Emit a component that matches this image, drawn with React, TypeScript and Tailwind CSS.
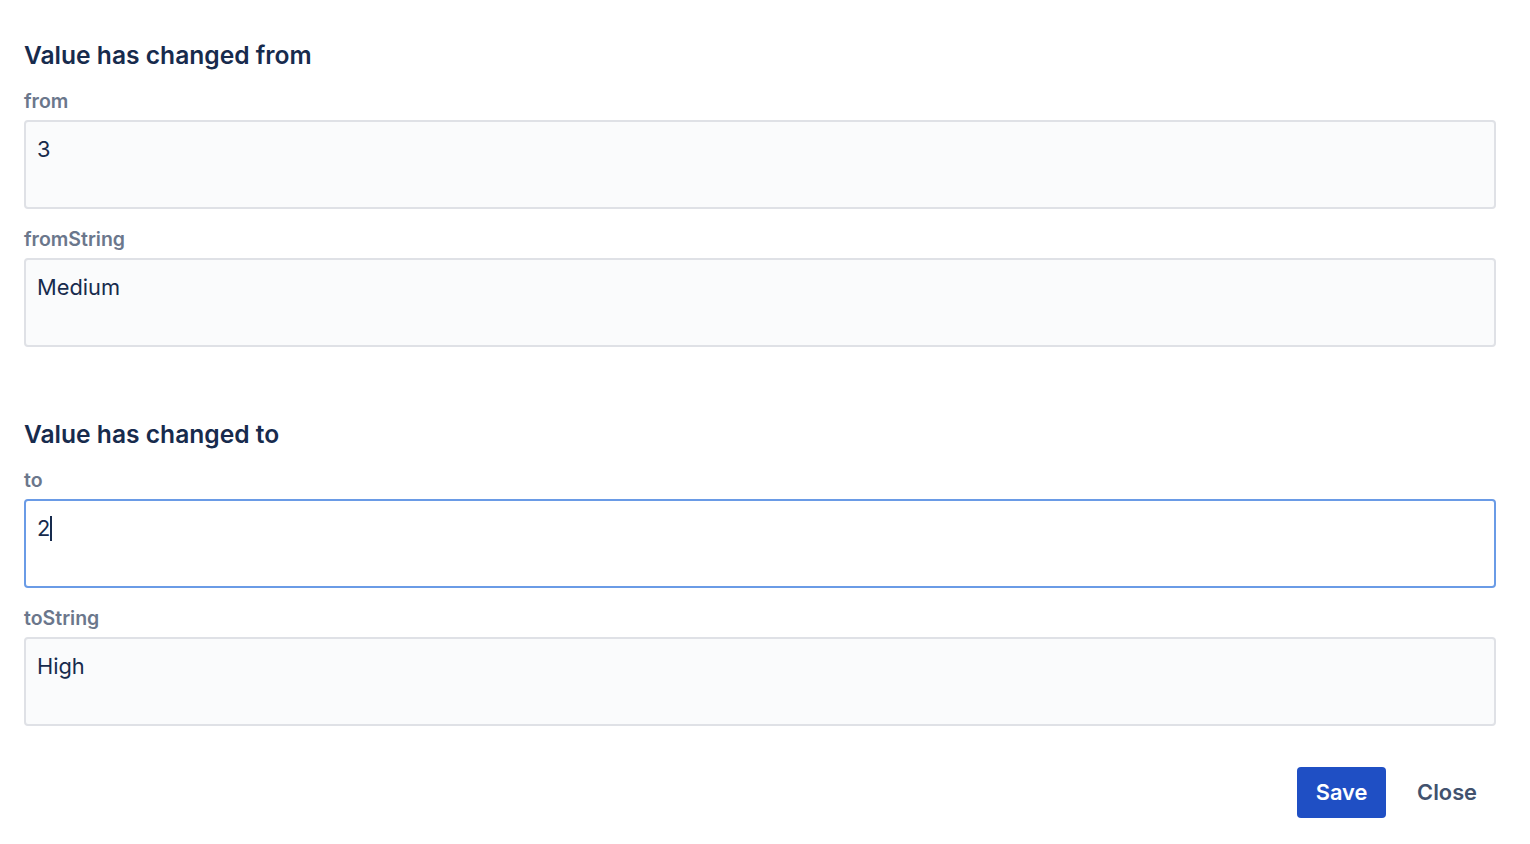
import React from "react";

function Field({ label, value, focused }: { label: string; value: string; focused?: boolean }) {
  return (
    <div className="flex flex-col">
      <label className="text-[19.5px] font-semibold text-[#6B778C] leading-[22px] mt-[19px] mb-[8px]">{label}</label>
      <div
        className={
          focused
            ? "h-[89px] rounded-[4px] border-2 border-[#6A9BE6] bg-white px-[11px] pt-[14px] text-[21.8px] text-[#172B4D] leading-[26px]"
            : "h-[89px] rounded-[4px] border-2 border-[#DFE1E6] bg-[#FAFBFC] px-[11px] pt-[14px] text-[21.8px] text-[#172B4D] leading-[26px]"
        }
      >
        {value}
        {focused ? <span className="inline-block w-[2px] h-[25px] bg-[#172B4D] align-[-5px]" /> : null}
      </div>
    </div>
  );
}

export default function App() {
  return (
    <div className="min-h-screen bg-white pl-[24px] pr-[34px] pt-[39px]" style={{ fontFamily: "Inter, 'Noto Sans', sans-serif" }}>
      <h2 className="text-[24.6px] font-semibold text-[#172B4D] leading-[32px]">Value has changed from</h2>
      <Field label="from" value="3" />
      <Field label="fromString" value="Medium" />
      <h2 className="text-[24.6px] font-semibold text-[#172B4D] leading-[32px] mt-[71px]">Value has changed to</h2>
      <Field label="to" value="2" focused />
      <Field label="toString" value="High" />
      <div className="flex justify-end items-center gap-[12px] mt-[41px]">
        <button className="h-[51px] w-[89px] rounded-[4px] bg-[#1F4FC4] text-white text-[21.8px] font-semibold">Save</button>
        <button className="h-[51px] px-[19px] rounded-[4px] text-[#42526E] text-[21.8px] font-semibold">Close</button>
      </div>
    </div>
  );
}
